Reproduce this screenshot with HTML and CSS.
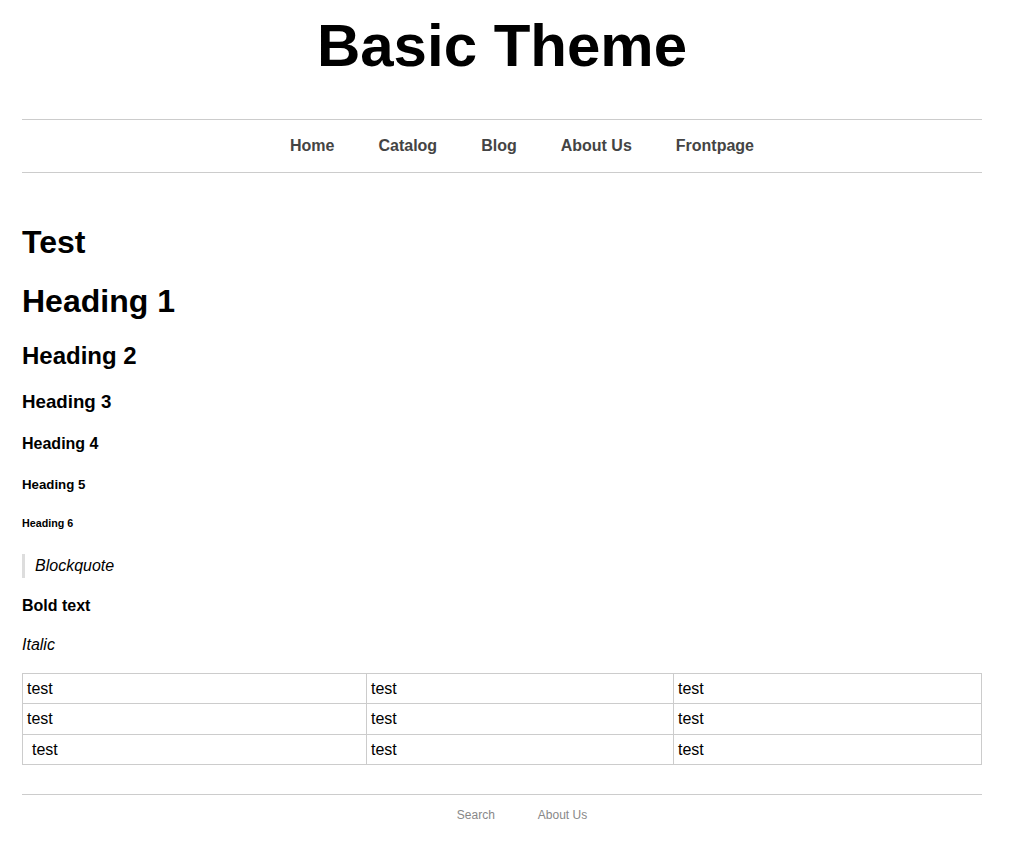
FILE: index.html
```html
<!DOCTYPE html>
<html>
<head>
<meta charset="utf-8">
<title>Basic Theme</title>
<link rel="stylesheet" href="styles.css">
</head>
<body>
<div class="page">
  <header class="site-header">
    <h1 class="site-title">Basic Theme</h1>
  </header>
  <nav class="main-nav">
    <ul>
      <li><a href="#">Home</a></li>
      <li><a href="#">Catalog</a></li>
      <li><a href="#">Blog</a></li>
      <li><a href="#">About Us</a></li>
      <li><a href="#">Frontpage</a></li>
    </ul>
  </nav>
  <main class="content">
    <h1>Test</h1>
    <h1>Heading 1</h1>
    <h2>Heading 2</h2>
    <h3>Heading 3</h3>
    <h4>Heading 4</h4>
    <h5>Heading 5</h5>
    <h6>Heading 6</h6>
    <blockquote><p>Blockquote</p></blockquote>
    <p><strong>Bold text</strong></p>
    <p><em>Italic</em></p>
    <table class="data">
      <colgroup>
        <col class="col1">
        <col class="col2">
        <col class="col3">
      </colgroup>
      <tr><td>test</td><td>test</td><td>test</td></tr>
      <tr><td>test</td><td>test</td><td>test</td></tr>
      <tr><td class="indent">test</td><td>test</td><td>test</td></tr>
    </table>
  </main>
  <footer class="site-footer">
    <ul>
      <li><a href="#">Search</a></li>
      <li><a href="#">About Us</a></li>
    </ul>
  </footer>
</div>
</body>
</html>
```
FILE: styles.css
```css
html, body {
  margin: 0;
  padding: 0;
  background: #fff;
}
body {
  font-family: "Liberation Sans", Arial, sans-serif;
  color: #000;
  font-size: 16px;
}
.page {
  width: 960px;
  margin: 0 0 0 22px;
}
.site-header {
  text-align: center;
  padding-top: 8px;
  height: 119px;
  box-sizing: border-box;
}
.site-title {
  margin: 0;
  font-size: 60px;
  line-height: 76px;
  font-weight: bold;
}
.main-nav {
  border-top: 1px solid #ccc;
  border-bottom: 1px solid #ccc;
}
.main-nav ul {
  list-style: none;
  margin: 0;
  padding: 0;
  display: flex;
  justify-content: center;
  gap: 4px;
}
.main-nav li {
  padding-left: 40px;
}
.main-nav a {
  display: block;
  line-height: 52px;
  font-weight: bold;
  font-size: 16px;
  color: #444;
  text-decoration: none;
}
.content {
  padding-top: 51px;
}
.content > * { margin-top: 0; }
.content h1 { font-size: 32px; margin-bottom: 22px; }
.content h2 { font-size: 24px; margin-bottom: 21px; }
.content h3 { font-size: 18.72px; margin-bottom: 21.7px; }
.content h4 { font-size: 16px; margin-bottom: 24.7px; }
.content h5 { font-size: 13.28px; margin-bottom: 24.5px; }
.content h6 { font-size: 10.72px; margin-bottom: 25px; }
.content p { margin: 0 0 15.5px; line-height: 24px; }
blockquote {
  margin: 0 0 16px;
  padding-left: 10px;
  border-left: 3px solid #ddd;
  font-style: italic;
}
blockquote p { margin: 0; line-height: 24px; }
.content p.last { margin-bottom: 15px; }
.data {
  width: 960px;
  table-layout: fixed;
  border-collapse: collapse;
  margin-top: 0;
}
.data .col1 { width: 344px; }
.data .col2 { width: 307px; }
.data td {
  border: 1px solid #ccc;
  padding: 6px 4px;
  font-size: 16px;
  line-height: 17.5px;
  text-align: left;
}
.data .indent { padding-left: 9px; }
.site-footer {
  margin-top: 29px;
  border-top: 1px solid #ccc;
  padding: 10px 0 20px;
}
.site-footer ul {
  list-style: none;
  margin: 0;
  padding: 0;
  display: flex;
  justify-content: center;
  gap: 3px;
}
.site-footer li {
  padding-left: 40px;
}
.site-footer a {
  font-size: 12px;
  color: #888;
  text-decoration: none;
}
```
